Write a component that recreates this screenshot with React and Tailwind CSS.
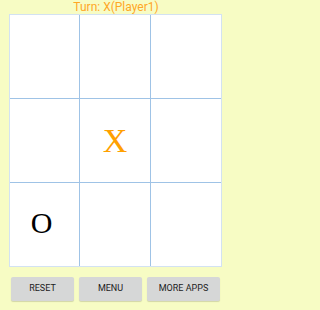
import React, { useState } from "react";

const cells = ["", "", "", "", "X", "", "O", "", ""];

const Cell = ({ value, index }) => {
    const col = index % 3;
    const row = Math.floor(index / 3);
    return (
        <div
            className={
                "flex items-center justify-center bg-white " +
                (col < 2 ? "border-r border-r-[#9fc3e6] " : "") +
                (row < 2 ? "border-b border-b-[#9fc3e6] " : "")
            }
        >
            {value === "X" && (
                <span className="text-[34px] leading-none text-[#ffa000] font-['Liberation_Serif',serif] mt-[1px]">X</span>
            )}
            {value === "O" && (
                <span className="text-[30px] leading-none text-black font-['Liberation_Serif',serif] mr-[6px] mb-[3px]">O</span>
            )}
        </div>
    );
};

const App = () => {
    const [board] = useState(cells);

    return (
        <div className="w-full min-h-screen bg-[#f7fcc4]">
            <div className="w-[232px] h-[310px] flex flex-col font-['Roboto',sans-serif]">
                {/* Turn label */}
                <div className="h-[13px] flex items-center justify-center text-[12px] leading-none text-[#ffa726]">
                    Turn: X(Player1)
                </div>

                {/* Board */}
                <div className="mx-[9px] mt-[1px] w-[213px] h-[253px] border border-[#d3e2f2] grid grid-cols-3 grid-rows-[84px_84px_83px]">
                    {board.map((v, i) => (
                        <Cell key={i} value={v} index={i} />
                    ))}
                </div>

                {/* Buttons */}
                <div className="flex gap-[5px] pl-[11px] mt-[10px]">
                    <button className="w-[63px] h-[24px] rounded-[2px] bg-[#d6d7d7] shadow-[0_1px_1px_rgba(0,0,0,0.15)] text-[9px] text-[#222] uppercase">
                        Reset
                    </button>
                    <button className="w-[63px] h-[24px] rounded-[2px] bg-[#d6d7d7] shadow-[0_1px_1px_rgba(0,0,0,0.15)] text-[9px] text-[#222] uppercase">
                        Menu
                    </button>
                    <button className="w-[73px] h-[24px] rounded-[2px] bg-[#d6d7d7] shadow-[0_1px_1px_rgba(0,0,0,0.15)] text-[9px] text-[#222] uppercase">
                        More Apps
                    </button>
                </div>
            </div>
        </div>
    );
};

export default App;
